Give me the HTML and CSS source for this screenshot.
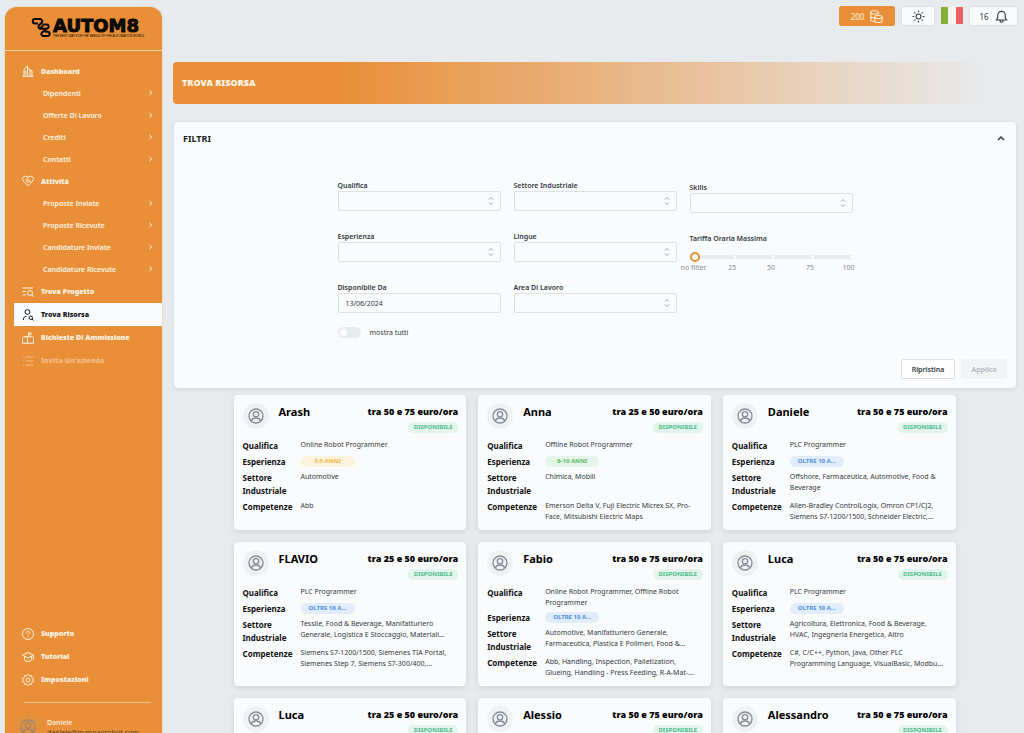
FILE: index.html
```html
<!DOCTYPE html>
<html lang="it">
<head>
<meta charset="utf-8">
<meta name="viewport" content="width=device-width, initial-scale=1">
<title>Autom8 - Trova Risorsa</title>
<link rel="stylesheet" href="styles.css">
</head>
<body>
<svg class="sprite" aria-hidden="true">
  <symbol id="chevron" viewBox="0 0 6 8"><path d="M1.500 2 3.800 4 1.500 6"/></symbol>
  <symbol id="updown" viewBox="0 0 8 10"><path d="M2 3.500 4 1.500 6 3.500M2 6.500 4 8.500 6 6.500"/></symbol>
  <symbol id="person" viewBox="0 0 24 24"><circle cx="12" cy="12" r="10.500"/><circle cx="12" cy="9.500" r="4"/><path d="M5 19.500c1-3.500 3.500-4.500 7-4.500s6 1 7 4.500"/></symbol>
</svg>
<div class="app">
  <aside class="sidebar">
    <div class="brand">
      <svg class="brand-mark" viewBox="0 0 20 20"><path d="M4 1.500H9a2.200 2.200 0 0 1 1.600 3.700L7.800 8A2 2 0 0 0 9 11.200H15.500a2 2 0 0 0 0-4.200H11.500M4 1.500a2 2 0 0 0 0 4.500H7M15.500 11.200 12 14.500M9 11.200 12 8M12 18.500a2 2 0 0 1-1-3.500l1.500-1.200M12 18.500H16.500a2 2 0 0 0 0-4.300H14"/></svg>
      <div class="brand-words">
        <span class="brand-name">AUTOM8</span>
        <span class="brand-line">THE BEST WAY FOR THE NEEDS OF THE AUTOMATION WORLD</span>
      </div>
    </div>
    <nav class="menu">
      <a class="item" href="#"><svg class="ico" viewBox="0 0 24 24"><path d="M1 22.500H23M4 22V8l7-6v20M11 6l5 3v13M16 11h4v11M7.500 11v8"/></svg>Dashboard</a>
      <a class="sub" href="#">Dipendenti<svg><use href="#chevron"/></svg></a>
      <a class="sub" href="#">Offerte Di Lavoro<svg><use href="#chevron"/></svg></a>
      <a class="sub" href="#">Crediti<svg><use href="#chevron"/></svg></a>
      <a class="sub" href="#">Contatti<svg><use href="#chevron"/></svg></a>
      <a class="item" href="#"><svg class="ico" viewBox="0 0 24 24"><path d="M12 21.500 2.500 12C-.5 8 2 2.500 7 2.500c2.500 0 4 1 5 2.500 1-1.500 2.500-2.500 5-2.500 5 0 7.500 5.500 4.500 9.500zM12 5 7.500 9.500c1.500 2 3.500 1.500 5 0l5.500 5M9 13l3 3M12 11l3 3"/></svg>Attività</a>
      <a class="sub" href="#">Proposte Inviate<svg><use href="#chevron"/></svg></a>
      <a class="sub" href="#">Proposte Ricevute<svg><use href="#chevron"/></svg></a>
      <a class="sub" href="#">Candidature Inviate<svg><use href="#chevron"/></svg></a>
      <a class="sub" href="#">Candidature Ricevute<svg><use href="#chevron"/></svg></a>
      <a class="item tall" href="#"><svg class="ico" viewBox="0 0 24 24"><path d="M1 4H22M1 11H8M1 18H8M19.500 17.500l3.500 4"/><circle cx="16" cy="14" r="5"/></svg>Trova Progetto</a>
      <a class="item tall current" href="#" aria-current="page"><svg class="ico" viewBox="0 0 24 24"><circle cx="11" cy="6" r="4.800"/><path d="M3 22v-2c0-3 2-5 6-5M20 20l3 3"/><circle cx="17.500" cy="17.500" r="3.500"/></svg>Trova Risorsa</a>
      <a class="item tall" href="#"><svg class="ico" viewBox="0 0 24 24"><path d="M11 22.500H23V13c0-2-1-3.500-3.500-3.500H5M1 22.500V13c0-2 2-3.500 5-3.500s5 1.500 5 3.500v9.500H1M13 9.500V1.500h5v4h-5"/></svg>Richieste Di Ammissione</a>
      <a class="item tall faded" href="#"><svg class="ico" viewBox="0 0 24 24"><path d="M7 4H23M7 12H23M7 20H23M2 4h2M2 12h2M2 20h2"/></svg>Invita Un'azienda</a>
    </nav>
    <nav class="menu menu-bottom">
      <a class="item tall" href="#"><svg class="ico" viewBox="0 0 24 24"><circle cx="12" cy="12" r="11"/><path d="M8.500 9.500c0-4 7-4 7 0 0 2.500-3.500 2.500-3.500 5M12 17v1.500"/></svg>Supporto</a>
      <a class="item tall" href="#"><svg class="ico" viewBox="0 0 24 24"><path d="M1 8.500 12 3l11 5.500L12 14zM5 11v7c3 4 11 4 14 0v-7M22.500 9v9"/></svg>Tutorial</a>
      <a class="item tall" href="#"><svg class="ico" viewBox="0 0 24 24"><path d="M12 1l3 2.500 4-.5.8 4L23 9.500 21.500 12l1.500 3.500-3.500 1.500-.8 4-4-.5L12 23l-2.700-2.500-4 .5-.8-4L1 15.500 2.500 12 1 8.500l3.500-1.500.8-4 4 .5z"/><circle cx="12" cy="12" r="4"/></svg>Impostazioni</a>
    </nav>
    <div class="user">
      <span class="user-face"><svg><use href="#person"/></svg></span>
      <div class="user-text"><span class="user-name">Daniele</span><span>daniele@mangaorobot.com</span></div>
    </div>
  </aside>

  <main class="content">
    <header class="topbar">
      <button class="tool credit" type="button">200<svg viewBox="0 0 24 24"><ellipse cx="8.500" cy="4.500" rx="7" ry="3"/><path d="M1.500 4.500v14c0 1.500 2 2.500 5 3M15.500 4.500v4M1.500 11.500c0 1.500 2 2.500 5 2.800"/><ellipse cx="15.500" cy="13" rx="7" ry="3"/><path d="M8.500 13v7c0 4 14 4 14 0v-7"/></svg></button>
      <button class="tool" type="button" aria-label="Tema"><svg viewBox="0 0 24 24"><circle cx="12" cy="12" r="4.500"/><path d="M12 1v3M12 20V23M1 12h3M20 12H23M4.200 4.200l2 2M17.800 17.800l2 2M4.200 19.800l2-2M17.800 6.200l2-2"/></svg></button>
      <button class="flag" type="button" aria-label="Italiano"></button>
      <button class="tool bell" type="button">16<svg viewBox="0 0 24 24"><path d="M2.500 18.500H21.500L19 15V9.500a7 7 0 0 0-14 0V15zM9 19c0 5 6 5 6 0M12 1v2"/></svg></button>
    </header>

    <h1 class="banner">TROVA RISORSA</h1>

    <section class="filters">
      <div class="filters-head"><h2>FILTRI</h2><button type="button" aria-label="Chiudi filtri"><svg viewBox="0 0 10 6"><path d="M2 5 5 2 8 5"/></svg></button></div>
      <form class="filters-form">
        <div class="column">
          <div class="field"><label for="f1">Qualifica</label><span class="pick"><select id="f1"><option></option></select><svg><use href="#updown"/></svg></span></div>
          <div class="field"><label for="f2">Esperienza</label><span class="pick"><select id="f2"><option></option></select><svg><use href="#updown"/></svg></span></div>
          <div class="field"><label for="f3">Disponibile Da</label><input class="date" id="f3" type="text" value="13/06/2024"></div>
          <label class="toggle"><input type="checkbox" role="switch">mostra tutti</label>
        </div>
        <div class="column">
          <div class="field"><label for="f4">Settore Industriale</label><span class="pick"><select id="f4"><option></option></select><svg><use href="#updown"/></svg></span></div>
          <div class="field"><label for="f5">Lingue</label><span class="pick"><select id="f5"><option></option></select><svg><use href="#updown"/></svg></span></div>
          <div class="field"><label for="f6">Area Di Lavoro</label><span class="pick"><select id="f6"><option></option></select><svg><use href="#updown"/></svg></span></div>
        </div>
        <div class="column lowered">
          <div class="field"><label for="f7">Skills</label><span class="pick"><select id="f7"><option></option></select><svg><use href="#updown"/></svg></span></div>
          <div class="field"><label for="f8">Tariffa Oraria Massima</label>
            <div class="rate"><input id="f8" type="range" min="0" max="100" step="25" value="0">
            <div class="marks"><span>no filter</span><span>25</span><span>50</span><span>75</span><span>100</span></div></div>
          </div>
        </div>
      </form>
      <div class="actions"><button type="button">Ripristina</button><button type="button" disabled>Applica</button></div>
    </section>

    <section class="cards">
      <article class="card">
        <header><span class="face"><svg><use href="#person"/></svg></span><h3>Arash</h3><div class="rate-box"><strong>tra 50 e 75 euro/ora</strong><span class="status">DISPONIBILE</span></div></header>
        <dl><dt>Qualifica</dt><dd>Online Robot Programmer</dd><dt>Esperienza</dt><dd><span class="pill yellow">3-5 ANNI</span></dd><dt>Settore Industriale</dt><dd>Automotive</dd><dt>Competenze</dt><dd>Abb</dd></dl>
      </article>
      <article class="card">
        <header><span class="face"><svg><use href="#person"/></svg></span><h3>Anna</h3><div class="rate-box"><strong>tra 25 e 50 euro/ora</strong><span class="status">DISPONIBILE</span></div></header>
        <dl><dt>Qualifica</dt><dd>Offline Robot Programmer</dd><dt>Esperienza</dt><dd><span class="pill green">6-10 ANNI</span></dd><dt>Settore Industriale</dt><dd>Chimica, Mobili</dd><dt>Competenze</dt><dd>Emerson Delta V, Fuji Electric Micrex SX, Pro-<br>Face, Mitsubishi Electric Maps</dd></dl>
      </article>
      <article class="card">
        <header><span class="face"><svg><use href="#person"/></svg></span><h3>Daniele</h3><div class="rate-box"><strong>tra 50 e 75 euro/ora</strong><span class="status">DISPONIBILE</span></div></header>
        <dl><dt>Qualifica</dt><dd>PLC Programmer</dd><dt>Esperienza</dt><dd><span class="pill blue">OLTRE 10 A...</span></dd><dt>Settore Industriale</dt><dd>Offshore, Farmaceutica, Automotive, Food &amp;<br>Beverage</dd><dt>Competenze</dt><dd>Allen-Bradley ControlLogix, Omron CP1/CJ2,<br>Siemens S7-1200/1500, Schneider Electric,...</dd></dl>
      </article>
      <article class="card">
        <header><span class="face"><svg><use href="#person"/></svg></span><h3>FLAVIO</h3><div class="rate-box"><strong>tra 25 e 50 euro/ora</strong><span class="status">DISPONIBILE</span></div></header>
        <dl><dt>Qualifica</dt><dd>PLC Programmer</dd><dt>Esperienza</dt><dd><span class="pill blue">OLTRE 10 A...</span></dd><dt>Settore Industriale</dt><dd>Tessile, Food &amp; Beverage, Manifatturiero<br>Generale, Logistica E Stoccaggio, Materiali...</dd><dt>Competenze</dt><dd>Siemens S7-1200/1500, Siemenes TIA Portal,<br>Siemenes Step 7, Siemens S7-300/400,...</dd></dl>
      </article>
      <article class="card">
        <header><span class="face"><svg><use href="#person"/></svg></span><h3>Fabio</h3><div class="rate-box"><strong>tra 50 e 75 euro/ora</strong><span class="status">DISPONIBILE</span></div></header>
        <dl><dt>Qualifica</dt><dd>Online Robot Programmer, Offline Robot<br>Programmer</dd><dt>Esperienza</dt><dd><span class="pill blue">OLTRE 10 A...</span></dd><dt>Settore Industriale</dt><dd>Automotive, Manifatturiero Generale,<br>Farmaceutica, Plastica E Polimeri, Food &amp;...</dd><dt>Competenze</dt><dd>Abb, Handling, Inspection, Palletization,<br>Glueing, Handling - Press Feeding, R-A-Mat-...</dd></dl>
      </article>
      <article class="card">
        <header><span class="face"><svg><use href="#person"/></svg></span><h3>Luca</h3><div class="rate-box"><strong>tra 50 e 75 euro/ora</strong><span class="status">DISPONIBILE</span></div></header>
        <dl><dt>Qualifica</dt><dd>PLC Programmer</dd><dt>Esperienza</dt><dd><span class="pill blue">OLTRE 10 A...</span></dd><dt>Settore Industriale</dt><dd>Agricoltura, Elettronica, Food &amp; Beverage,<br>HVAC, Ingegneria Energetica, Altro</dd><dt>Competenze</dt><dd>C#, C/C++, Python, Java, Other PLC<br>Programming Language, VisualBasic, Modbu...</dd></dl>
      </article>
      <article class="card">
        <header><span class="face"><svg><use href="#person"/></svg></span><h3>Luca</h3><div class="rate-box"><strong>tra 25 e 50 euro/ora</strong><span class="status">DISPONIBILE</span></div></header>
      </article>
      <article class="card">
        <header><span class="face"><svg><use href="#person"/></svg></span><h3>Alessio</h3><div class="rate-box"><strong>tra 50 e 75 euro/ora</strong><span class="status">DISPONIBILE</span></div></header>
      </article>
      <article class="card">
        <header><span class="face"><svg><use href="#person"/></svg></span><h3>Alessandro</h3><div class="rate-box"><strong>tra 50 e 75 euro/ora</strong><span class="status">DISPONIBILE</span></div></header>
      </article>
    </section>
  </main>
</div>
</body>
</html>
```
FILE: styles.css
```css
* { box-sizing: border-box; }
body {
  margin: 0;
  background: #e8ebee;
  color: #343a40;
  font: 7px/11px "Noto Sans", "Open Sans", sans-serif;
}
h1, h2, h3, dl, dd { margin: 0; }
button, input, select { font: inherit; color: inherit; margin: 0; }
button { cursor: pointer; padding: 0; }
a { color: inherit; text-decoration: none; }
svg { fill: none; stroke: currentColor; stroke-width: 2; flex: none; }
.sprite { position: absolute; width: 0; height: 0; }

.app {
  display: grid;
  grid-template-columns: 157px minmax(0, 1fr);
  column-gap: 11px;
  height: 100vh;
  padding: 0 8px 0 5px;
  overflow: hidden;
}

/* Sidebar */
.sidebar {
  display: flex;
  flex-direction: column;
  height: 100vh;
  margin-top: 7px;
  border-radius: 12px 12px 0 0;
  background: #e98f38;
  color: #fff6e6;
  box-shadow: 0 0 2px #d8b896;
}
.brand {
  display: flex;
  gap: 2px;
  height: 44px;
  padding: 10px 0 0 26px;
  border-bottom: 1px solid #f3d3a0;
  color: #0c0a08;
}
.brand-mark { width: 20px; height: 21px; }
.brand-words { display: flex; flex-direction: column; }
.brand-name {
  font: 900 18px/18px "DejaVu Sans", sans-serif;
  -webkit-text-stroke: 1px #0c0a08;
}
.brand-line { font: 400 3px/3px "Liberation Sans", sans-serif; white-space: nowrap; }
.menu { display: flex; flex-direction: column; padding: 9px 0 0 9px; }
.menu-bottom { margin-top: auto; padding: 0 0 11px 9px; }
.item {
  display: flex;
  align-items: center;
  gap: 7px;
  height: 22px;
  padding-left: 8px;
  font-weight: 900;
}
.ico { width: 12px; height: 12px; }
.tall { height: 23px; }
.current { background: #fafbfd; color: #15171a; }
.faded { color: #f3bc83; }
.sub {
  display: flex;
  align-items: center;
  justify-content: space-between;
  height: 22px;
  padding: 0 8px 0 29px;
  font-weight: 600;
}
.sub svg { width: 6px; height: 8px; stroke-width: 1; }
.user {
  display: flex;
  align-items: flex-start;
  gap: 7px;
  height: 38px;
  margin: 0 11px 0 19px;
  border-top: 1px solid #ecc890;
}
.user-face {
  display: grid;
  place-items: center;
  width: 24px;
  height: 24px;
  margin: 12px 0 0 -8px;
  border-radius: 50%;
  background: #df8f40;
  color: #a48766;
}
.user-face svg { width: 16px; height: 16px; }
.user-text { display: flex; flex-direction: column; padding-top: 15px; line-height: 10px; color: #5d4426; }
.user-name { color: #fff6e6; font-weight: 500; }

/* Top bar */
.content { min-width: 0; }
.topbar { display: flex; justify-content: flex-end; gap: 6px; padding-top: 6px; margin-right: -2px; }
.tool {
  display: flex;
  align-items: center;
  justify-content: center;
  gap: 6px;
  width: 34px;
  height: 20px;
  border: 1px solid #dee2e6;
  border-radius: 2px;
  background: #fafbfd;
  font-size: 8px;
}
.tool svg { width: 13px; height: 13px; }
.credit { width: 56px; border-color: #e98f38; background: #e98f38; color: #fff0d8; }
.bell { width: 49px; }
.flag {
  width: 22px;
  height: 17px;
  margin-top: 1px;
  border: 0;
  background: linear-gradient(90deg, #83b135 33%, #f4f4f4 33% 66%, #ec5e60 66%);
}

.banner {
  height: 42px;
  margin-top: 36px;
  padding-left: 9px;
  border-radius: 4px;
  background: linear-gradient(90deg, #e98f38 20%, transparent 97%);
  color: #fff6e6;
  font-size: 9px;
  font-weight: 900;
  line-height: 42px;
}

/* Filters */
.filters {
  margin: 18px 0 0 1px;
  padding: 8px 9px 9px;
  border-radius: 4px;
  background: #fafbfd;
  box-shadow: 0 1px 4px #ced2d7;
}
.filters-head { display: flex; align-items: center; justify-content: space-between; height: 16px; }
.filters-head h2 { font-size: 9px; color: #212529; }
.filters-head button { width: 12px; height: 12px; border: 0; background: none; line-height: 0; }
.filters-head svg { width: 10px; height: 6px; stroke-width: 1.500; }
.filters-form {
  display: grid;
  grid-template-columns: repeat(3, 163px);
  justify-content: center;
  gap: 13px;
  padding-top: 34px;
}
.column { display: flex; flex-direction: column; gap: 20px; }
.lowered { padding-top: 2px; }
.field { display: flex; flex-direction: column; }
.field label { font-weight: 600; }
.pick { display: grid; align-items: center; }
.pick > * { grid-area: 1 / 1; }
.pick svg { justify-self: end; width: 8px; height: 10px; margin-right: 6px; stroke-width: 1; color: #a0a6ac; pointer-events: none; }
.pick select, .date {
  width: 100%;
  height: 20px;
  padding: 0 7px;
  border: 1px solid #dee2e6;
  border-radius: 2px;
  background: #fafbfd;
  appearance: none;
}
.toggle { display: flex; align-items: center; gap: 9px; margin-top: -6px; }
.toggle input {
  width: 23px;
  height: 11px;
  padding: 2px;
  border-radius: 6px;
  background: #e9ecef;
  appearance: none;
}
.toggle input::before { content: ""; display: block; width: 7px; height: 7px; border-radius: 50%; background: #fff; }
.rate { display: flex; flex-direction: column; padding-top: 8px; }
.rate input {
  width: 100%;
  height: 10px;
  border-radius: 2px;
  background:
    radial-gradient(circle, #fff 1px, transparent 2px) 25px 0 / 39px 10px repeat-x,
    linear-gradient(#e9ecef, #e9ecef) 0 50% / 100% 4px no-repeat;
  appearance: none;
}
.rate input::-webkit-slider-thumb {
  width: 10px;
  height: 10px;
  border: 2px solid #e98f38;
  border-radius: 50%;
  background: #fff;
  appearance: none;
}
.marks { display: flex; justify-content: space-between; margin: 0 -11px; color: #868e96; }
.marks span { width: 30px; text-align: center; white-space: nowrap; }
.actions { display: flex; justify-content: flex-end; gap: 6px; padding-top: 21px; }
.actions button {
  width: 54px;
  height: 20px;
  border: 1px solid #dee2e6;
  border-radius: 2px;
  background: #fff;
  font-weight: 600;
}
.actions button:disabled { width: 46px; border-color: #f1f3f5; background: #f1f3f5; color: #b3b8be; }

/* Resource cards */
.cards {
  display: grid;
  grid-template-columns: repeat(3, minmax(0, 1fr));
  gap: 12px;
  max-width: 722px;
  margin: 7px auto 0;
}
.card {
  padding: 8px 8px 8px 9px;
  border-radius: 4px;
  background: #fafbfd;
  box-shadow: 0 2px 6px #cdd1d6;
}
.card header { display: flex; height: 36px; }
.face {
  display: grid;
  place-items: center;
  width: 26px;
  height: 26px;
  border-radius: 50%;
  background: #eff1f3;
  color: #868e96;
}
.face svg { width: 16px; height: 16px; }
.card h3 { flex: 1; padding: 1px 0 0 10px; color: #000; font-size: 11px; line-height: 16px; }
.rate-box { display: flex; flex-direction: column; align-items: flex-end; gap: 3px; padding-top: 1px; }
.rate-box strong { color: #000; font-size: 9px; font-weight: 900; line-height: 15px; white-space: nowrap; }
.status, .pill { border-radius: 6px; font-size: 6px; font-weight: 700; line-height: 11px; text-align: center; }
.status { width: 50px; background: #e2f4ec; color: #4fbd8c; }
.pill { display: block; width: 54px; margin-top: 1px; }
.yellow { background: #fcf3dc; color: #efb73e; }
.green { background: #e5f5e8; color: #5cba6a; }
.blue { background: #e1edfa; color: #4b8fdd; }
.card dl { display: grid; grid-template-columns: 58px minmax(0, 1fr); row-gap: 3px; }
.card dt { color: #111; font-size: 8px; font-weight: 700; line-height: 13px; }
.card dd { white-space: nowrap; }
```
